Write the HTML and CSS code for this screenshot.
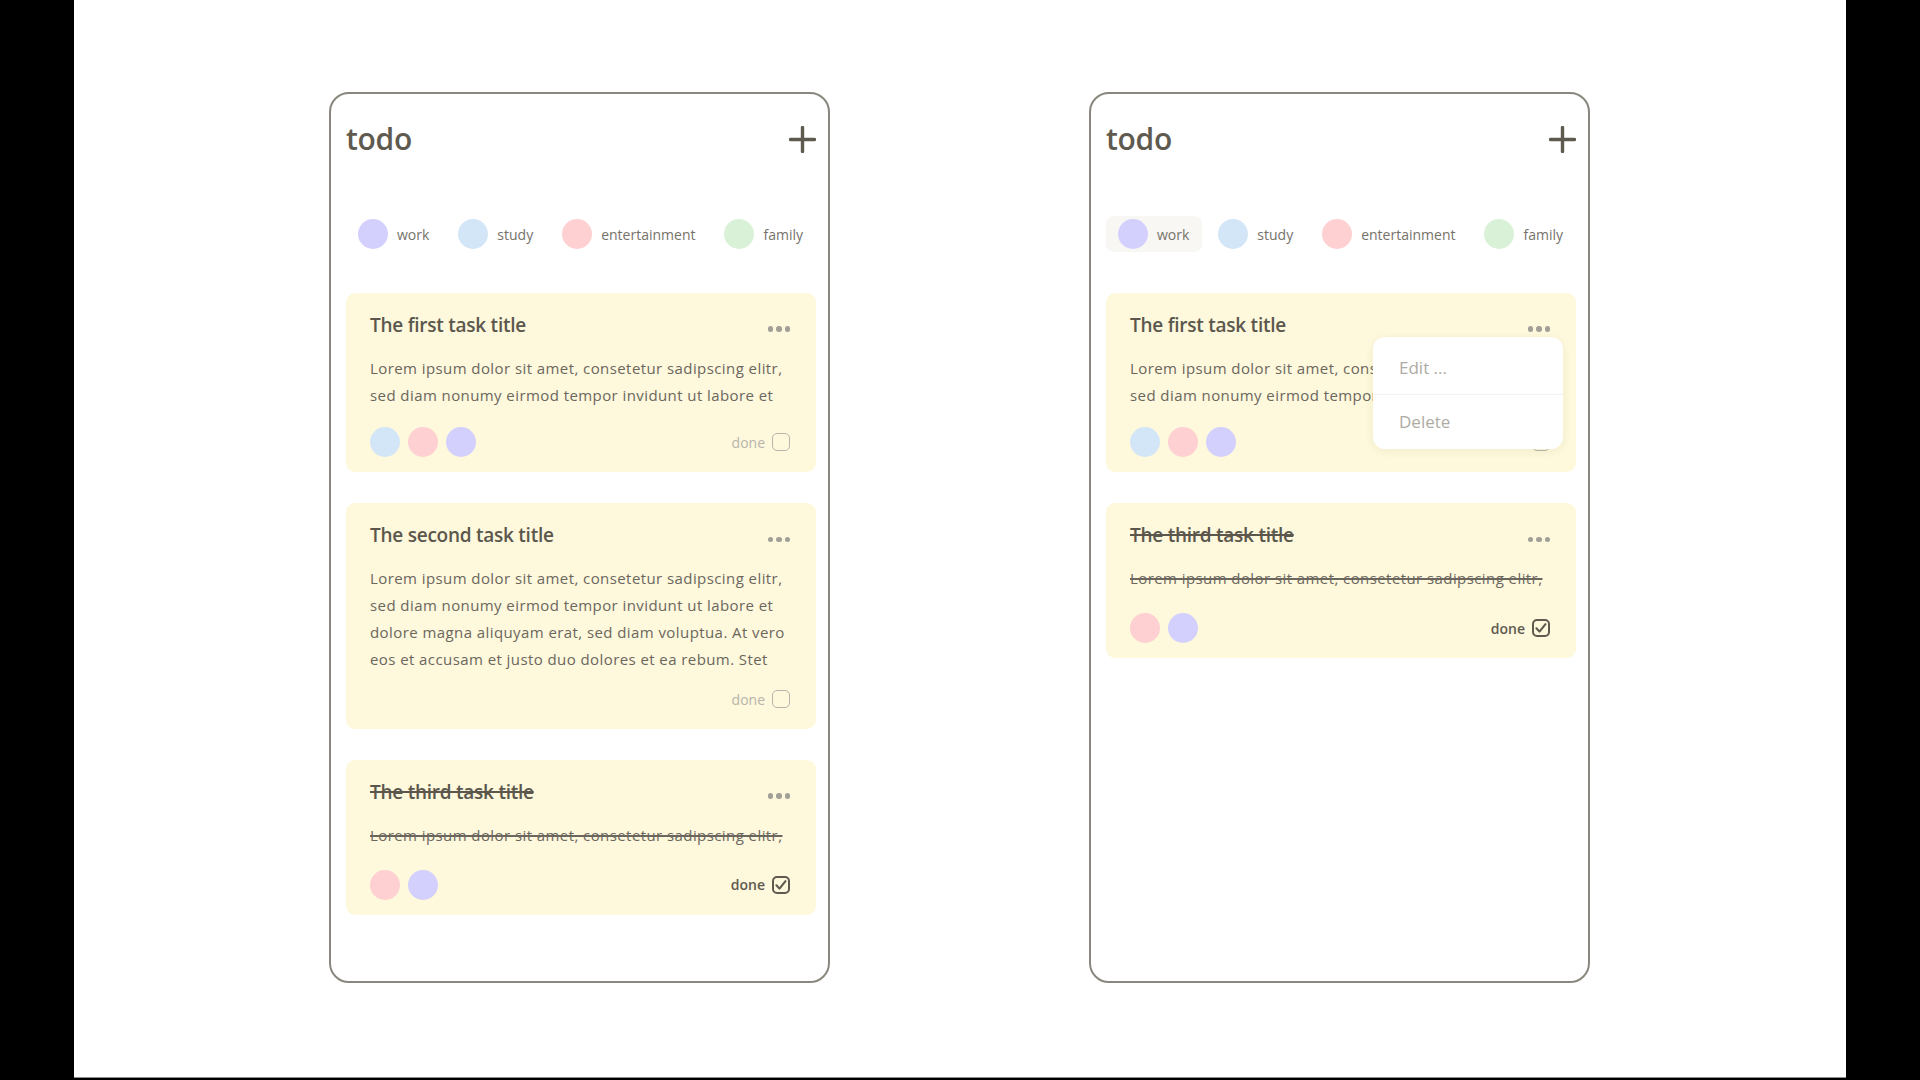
FILE: index.html
```html
<!DOCTYPE html>
<html lang="en">
<head>
<meta charset="utf-8">
<title>todo</title>
<link rel="stylesheet" href="styles.css">
</head>
<body>
<div class="screen">
  <section class="phone">
    <header class="phone-header">
      <h1 class="app-title">todo</h1>
      <span class="add" aria-label="add">
        <svg viewBox="0 0 27 27" width="27" height="27"><path d="M13.5 1.5v24M1.5 13.5h24" stroke="#5e5a50" stroke-width="3.4" stroke-linecap="round" fill="none"/></svg>
      </span>
    </header>
    <ul class="tags">
      <li class="tag"><span class="dot dot-work"></span>work</li>
      <li class="tag"><span class="dot dot-study"></span>study</li>
      <li class="tag"><span class="dot dot-ent"></span>entertainment</li>
      <li class="tag"><span class="dot dot-family"></span>family</li>
    </ul>
    <div class="tasks">
      <article class="card">
        <div class="card-head">
          <h2 class="card-title">The first task title</h2>
          <span class="more"><i></i><i></i><i></i></span>
        </div>
        <p class="card-text">Lorem ipsum dolor sit amet, consetetur sadipscing elitr, sed diam nonumy eirmod tempor invidunt ut labore et</p>
        <div class="card-foot">
          <div class="card-tags"><span class="dot dot-study"></span><span class="dot dot-ent"></span><span class="dot dot-work"></span></div>
          <span class="done">done <span class="check"></span></span>
        </div>
      </article>
      <article class="card">
        <div class="card-head">
          <h2 class="card-title">The second task title</h2>
          <span class="more"><i></i><i></i><i></i></span>
        </div>
        <p class="card-text">Lorem ipsum dolor sit amet, consetetur sadipscing elitr, sed diam nonumy eirmod tempor invidunt ut labore et dolore magna aliquyam erat, sed diam voluptua. At vero eos et accusam et justo duo dolores et ea rebum. Stet</p>
        <div class="card-foot card-foot-bare">
          <div class="card-tags"></div>
          <span class="done">done <span class="check"></span></span>
        </div>
      </article>
      <article class="card card-done">
        <div class="card-head">
          <h2 class="card-title">The third task title</h2>
          <span class="more"><i></i><i></i><i></i></span>
        </div>
        <p class="card-text">Lorem ipsum dolor sit amet, consetetur sadipscing elitr,</p>
        <div class="card-foot card-foot-loose">
          <div class="card-tags"><span class="dot dot-ent"></span><span class="dot dot-work"></span></div>
          <span class="done done-on">done <span class="check check-on"><svg viewBox="0 0 18 18" width="18" height="18"><path d="M4.4 9.3l3.1 3.3 6-7.4" stroke="#5e5a50" stroke-width="2.1" stroke-linecap="round" stroke-linejoin="round" fill="none"/></svg></span></span>
        </div>
      </article>
    </div>
  </section>

  <section class="phone">
    <header class="phone-header">
      <h1 class="app-title">todo</h1>
      <span class="add" aria-label="add">
        <svg viewBox="0 0 27 27" width="27" height="27"><path d="M13.5 1.5v24M1.5 13.5h24" stroke="#5e5a50" stroke-width="3.4" stroke-linecap="round" fill="none"/></svg>
      </span>
    </header>
    <ul class="tags">
      <li class="tag tag-active"><span class="dot dot-work"></span>work</li>
      <li class="tag"><span class="dot dot-study"></span>study</li>
      <li class="tag"><span class="dot dot-ent"></span>entertainment</li>
      <li class="tag"><span class="dot dot-family"></span>family</li>
    </ul>
    <div class="tasks">
      <article class="card">
        <div class="card-head">
          <h2 class="card-title">The first task title</h2>
          <span class="more"><i></i><i></i><i></i></span>
        </div>
        <p class="card-text">Lorem ipsum dolor sit amet, consetetur sadipscing elitr, sed diam nonumy eirmod tempor invidunt ut labore et</p>
        <div class="card-foot">
          <div class="card-tags"><span class="dot dot-study"></span><span class="dot dot-ent"></span><span class="dot dot-work"></span></div>
          <span class="done">done <span class="check"></span></span>
        </div>
        <ul class="menu">
          <li class="menu-item menu-item-first">Edit ...</li>
          <li class="menu-item">Delete</li>
        </ul>
      </article>
      <article class="card card-done">
        <div class="card-head">
          <h2 class="card-title">The third task title</h2>
          <span class="more"><i></i><i></i><i></i></span>
        </div>
        <p class="card-text">Lorem ipsum dolor sit amet, consetetur sadipscing elitr,</p>
        <div class="card-foot card-foot-loose">
          <div class="card-tags"><span class="dot dot-ent"></span><span class="dot dot-work"></span></div>
          <span class="done done-on">done <span class="check check-on"><svg viewBox="0 0 18 18" width="18" height="18"><path d="M4.4 9.3l3.1 3.3 6-7.4" stroke="#5e5a50" stroke-width="2.1" stroke-linecap="round" stroke-linejoin="round" fill="none"/></svg></span></span>
        </div>
      </article>
    </div>
  </section>
</div>
</body>
</html>
```

FILE: styles.css
```css
* { box-sizing: border-box; }

html, body {
  margin: 0;
  padding: 0;
  background: #000;
  height: 1080px;
  overflow: hidden;
}

body {
  font-family: "Open Sans", "Noto Sans", sans-serif;
  color: #5e5a50;
}

.screen {
  margin-left: 74px;
  width: 1772px;
  height: 1078px;
  background: #fff;
  border-bottom: 1px solid #8d8d8d;
  display: flex;
  align-items: flex-start;
  padding: 92px 0 0 255px;
  gap: 259px;
}

.phone {
  width: 501px;
  height: 891px;
  border: 2px solid #8a877e;
  border-radius: 20px;
  padding: 25px 12px 0 15px;
  display: flex;
  flex-direction: column;
}

.phone-header {
  height: 40px;
  display: flex;
  align-items: center;
  justify-content: space-between;
}

.app-title {
  margin: 0;
  font-size: 30px;
  line-height: 40px;
  font-weight: 600;
  color: #5e5a50;
  letter-spacing: -0.3px;
}

.add {
  display: flex;
  width: 27px;
  height: 27px;
}

.tags {
  list-style: none;
  margin: 57px 0 0;
  padding: 0;
  display: flex;
  justify-content: space-between;
}

.tag {
  height: 36px;
  padding: 0 13px 0 12px;
  display: flex;
  align-items: center;
  gap: 9px;
  font-size: 14px;
  color: #76726a;
  border-radius: 8px;
}

.tag-active {
  background: #f8f7f4;
}

.dot {
  display: block;
  width: 30px;
  height: 30px;
  border-radius: 50%;
  flex: none;
}

.dot-work { background: #d4d0fd; }
.dot-study { background: #d3e6f7; }
.dot-ent { background: #fed0d2; }
.dot-family { background: #d9f1d7; }

.tasks {
  margin-top: 41px;
  display: flex;
  flex-direction: column;
  gap: 31px;
}

.card {
  position: relative;
  background: #fef8dc;
  border-radius: 9px;
  padding: 17px 26px 15px 24px;
}

.card-head {
  display: flex;
  align-items: center;
  justify-content: space-between;
}

.card-title {
  margin: 0;
  font-size: 19px;
  line-height: 30px;
  font-weight: 600;
  color: #5b574d;
  letter-spacing: -0.25px;
}

.more {
  display: flex;
  gap: 3px;
  margin-top: 8px;
}

.more i {
  display: block;
  width: 5.5px;
  height: 5.5px;
  border-radius: 50%;
  background: #a29f97;
}

.card-text {
  margin: 15px 0 0;
  font-size: 15px;
  line-height: 26.7px;
  color: #6b675e;
  letter-spacing: 0.42px;
}

.card-done .card-title,
.card-done .card-text {
  text-decoration: line-through;
  text-decoration-thickness: 1.6px;
}

.card-foot {
  margin-top: 19px;
  height: 30px;
  display: flex;
  align-items: center;
  justify-content: space-between;
}

.card-foot-bare { margin-top: 12px; }
.card-foot-loose { margin-top: 21px; }

.card-tags {
  display: flex;
  gap: 8px;
}

.done {
  display: flex;
  align-items: center;
  gap: 7px;
  font-size: 14px;
  color: #b7b4ab;
}

.done-on {
  color: #5e5a50;
  font-weight: 600;
}

.check {
  display: block;
  width: 18px;
  height: 18px;
  border: 1.6px solid #b7b4ab;
  border-radius: 5px;
  position: relative;
}

.check-on {
  border: 2px solid #5e5a50;
}

.check-on svg {
  position: absolute;
  left: -2px;
  top: -2px;
}

.menu {
  position: absolute;
  left: 267px;
  top: 44px;
  width: 190px;
  margin: 0;
  padding: 4px 0 0;
  list-style: none;
  background: #fff;
  border-radius: 12px;
  box-shadow: 0 2px 10px rgba(90, 80, 40, 0.07);
}

.menu-item {
  height: 54px;
  line-height: 54px;
  padding-left: 26px;
  font-size: 17px;
  color: #aeaba3;
}

.menu-item-first {
  border-bottom: 1.5px solid #f3f2ef;
}
```
